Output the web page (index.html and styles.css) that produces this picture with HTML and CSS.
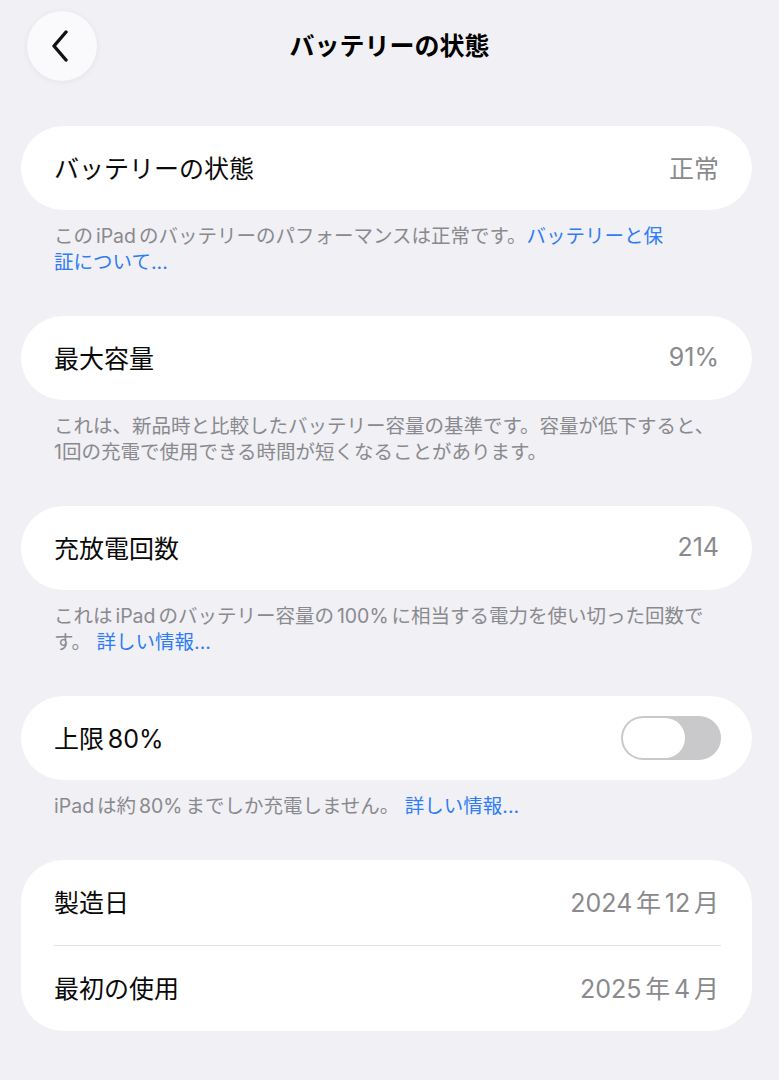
FILE: index.html
```html
<!DOCTYPE html>
<html lang="ja">
<head>
  <meta charset="UTF-8" />
  <meta name="viewport" content="width=device-width, initial-scale=1.0" />
  <title>バッテリーの状態</title>
  <link rel="stylesheet" href="styles.css">
</head>
<body>
  <header class="nav">
    <button class="back-btn" aria-label="戻る">
      <svg width="18" height="32" viewBox="0 0 18 32">
        <polyline points="15,2 3,16 15,30" fill="none" stroke="#111" stroke-width="3.4" stroke-linecap="round" stroke-linejoin="round" />
      </svg>
    </button>
    <h1 class="nav-title">バッテリーの状態</h1>
    <div></div>
  </header>

  <main class="content">
    <section class="group">
      <div class="card row">
        <span class="label">バッテリーの状態</span>
        <span class="value">正常</span>
      </div>
      <p class="note">この<span class="lt">iPad</span>のバッテリーのパフォーマンスは正常です。<a class="link">バッテリーと保<br>証について...</a></p>
    </section>

    <section class="group">
      <div class="card row">
        <span class="label">最大容量</span>
        <span class="value">91%</span>
      </div>
      <p class="note">これは、新品時と比較したバッテリー容量の基準です。容量が低下すると、<br>1回の充電で使用できる時間が短くなることがあります。</p>
    </section>

    <section class="group">
      <div class="card row">
        <span class="label">充放電回数</span>
        <span class="value">214</span>
      </div>
      <p class="note">これは<span class="lt">iPad</span>のバッテリー容量の<span class="lt">100%</span>に相当する電力を使い切った回数で<br>す。 <a class="link">詳しい情報...</a></p>
    </section>

    <section class="group">
      <div class="card row">
        <span class="label">上限<span class="lt-start">80%</span></span>
        <span class="toggle"><span class="knob"></span></span>
      </div>
      <p class="note"><span class="lt-end">iPad</span>は約<span class="lt">80%</span>までしか充電しません。 <a class="link">詳しい情報...</a></p>
    </section>

    <section class="group">
      <div class="card list">
        <div class="row list-row">
          <span class="label">製造日</span>
          <span class="value">2024<span class="lt">年</span>12<span class="lt-start">月</span></span>
        </div>
        <div class="divider"></div>
        <div class="row list-row">
          <span class="label">最初の使用</span>
          <span class="value">2025<span class="lt">年</span>4<span class="lt-start">月</span></span>
        </div>
      </div>
    </section>
  </main>
</body>
</html>
```

FILE: styles.css
```css
body {
  margin: 0;
  background-color: #f0f0f5;
  color: #000000;
  font-family: 'Inter', 'Noto Sans CJK JP', sans-serif;
}
.nav {
  display: grid;
  grid-template-columns: 1fr auto 1fr;
  align-items: center;
  padding: 11px 27px 0;
  height: 70px;
}
.back-btn {
  width: 70px;
  height: 70px;
  border: none;
  border-radius: 50%;
  background-color: #fafafc;
  box-shadow: 0 1px 6px rgba(0, 0, 0, 0.06);
  display: flex;
  align-items: center;
  justify-content: center;
  padding: 0 4px 0 0;
}
.nav-title {
  margin: 0 0 4px;
  font-size: 25px;
  font-weight: 700;
}
.content {
  padding: 45px 27px 0 21px;
}
.group {
  margin-bottom: 41px;
}
.card {
  background-color: #ffffff;
  border-radius: 42px;
}
.row {
  height: 84px;
  padding: 0 33px 3px;
  box-sizing: border-box;
  display: flex;
  align-items: center;
  justify-content: space-between;
}
.label {
  font-size: 25px;
  color: #0a0a0a;
}
.value {
  font-size: 25px;
  color: #8a8a8e;
}
.lt {
  margin: 0 0.15em;
}
.lt-start {
  margin-left: 0.15em;
}
.lt-end {
  margin-right: 0.15em;
}
.note {
  margin: 0;
  padding: 13px 33px 0;
  font-size: 19.5px;
  line-height: 26px;
  color: #8a8a8e;
  white-space: nowrap;
}
.link {
  color: #2f7cf6;
}
.toggle {
  width: 100px;
  height: 44px;
  border-radius: 22px;
  background-color: #c9c9cc;
  display: flex;
  align-items: center;
  padding: 0 2px;
  box-sizing: border-box;
  margin: 3px -2px 0 0;
}
.knob {
  width: 62px;
  height: 40px;
  border-radius: 20px;
  background-color: #ffffff;
}
.list-row {
  height: 85px;
}
.divider {
  height: 1px;
  margin: 0 31px 0 33px;
  background-color: #e2e2e6;
}
```
